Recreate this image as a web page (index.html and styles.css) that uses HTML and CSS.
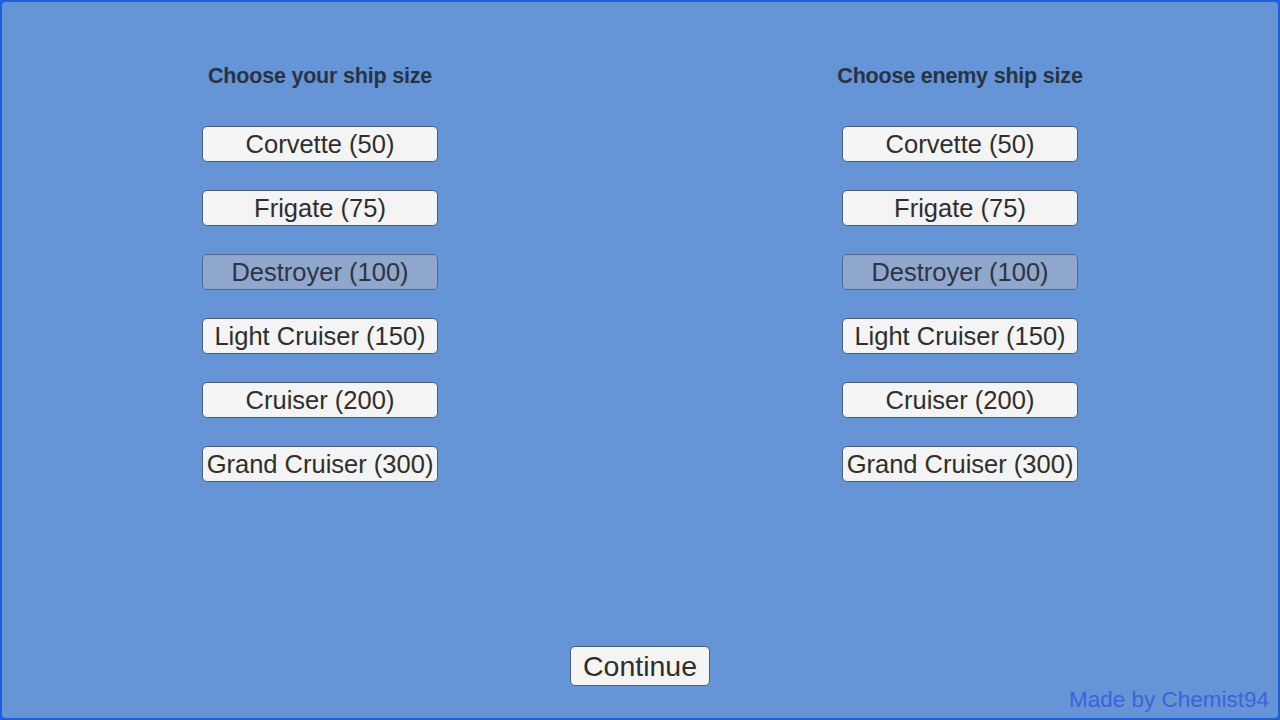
FILE: index.html
```html
<!DOCTYPE html>
<html>
<head>
<meta charset="utf-8">
<link rel="stylesheet" href="styles.css">
</head>
<body>
<div class="frame">
  <div class="columns">
    <div class="column">
      <h2 class="title">Choose your ship size</h2>
      <div class="options">
        <button class="opt">Corvette (50)</button>
        <button class="opt">Frigate (75)</button>
        <button class="opt selected">Destroyer (100)</button>
        <button class="opt">Light Cruiser (150)</button>
        <button class="opt">Cruiser (200)</button>
        <button class="opt">Grand Cruiser (300)</button>
      </div>
    </div>
    <div class="column">
      <h2 class="title">Choose enemy ship size</h2>
      <div class="options">
        <button class="opt">Corvette (50)</button>
        <button class="opt">Frigate (75)</button>
        <button class="opt selected">Destroyer (100)</button>
        <button class="opt">Light Cruiser (150)</button>
        <button class="opt">Cruiser (200)</button>
        <button class="opt">Grand Cruiser (300)</button>
      </div>
    </div>
  </div>
  <div class="actions">
    <button class="continue">Continue</button>
  </div>
  <div class="footer">Made by Chemist94</div>
</div>
</body>
</html>
```
FILE: styles.css
```css
html, body {
  margin: 0;
  padding: 0;
  width: 1280px;
  height: 720px;
  overflow: hidden;
  background: #1f5fdc;
}
.frame {
  box-sizing: border-box;
  width: 1280px;
  height: 720px;
  border: 2px solid #1f5fdc;
  border-radius: 6px;
  background: #6595d6;
  display: flex;
  flex-direction: column;
  font-family: "Liberation Sans", Arial, sans-serif;
}
.columns {
  display: grid;
  grid-template-columns: 636px 636px;
  column-gap: 4px;
  padding-top: 62px;
}
.column {
  display: flex;
  flex-direction: column;
  align-items: center;
}
.title {
  margin: 0;
  font-size: 21.5px;
  line-height: 24px;
  font-weight: bold;
  color: #283344;
  letter-spacing: -0.2px;
}
.options {
  margin-top: 38px;
  display: flex;
  flex-direction: column;
  gap: 28px;
}
.opt {
  box-sizing: border-box;
  width: 236px;
  height: 36px;
  padding: 0;
  border: 1px solid #4f5d70;
  border-radius: 5px;
  background: #f4f4f5;
  color: #2e2e2e;
  font-family: "Liberation Sans", Arial, sans-serif;
  font-size: 25.5px;
  line-height: 34px;
  white-space: nowrap;
}
.opt.selected {
  background: #8fa7cc;
  border-color: #56688a;
  color: #2e3440;
}
.actions {
  margin-top: auto;
  display: flex;
  justify-content: center;
}
.continue {
  box-sizing: border-box;
  width: 140px;
  height: 40px;
  padding: 0;
  border: 1px solid #4f5d70;
  border-radius: 5px;
  background: #f4f4f5;
  color: #2e2e2e;
  font-family: "Liberation Sans", Arial, sans-serif;
  font-size: 28.5px;
  line-height: 38px;
}
.footer {
  margin-top: 2px;
  align-self: flex-end;
  padding-right: 9px;
  padding-bottom: 6px;
  font-size: 22.5px;
  line-height: 24px;
  color: #3d63d9;
}
```
